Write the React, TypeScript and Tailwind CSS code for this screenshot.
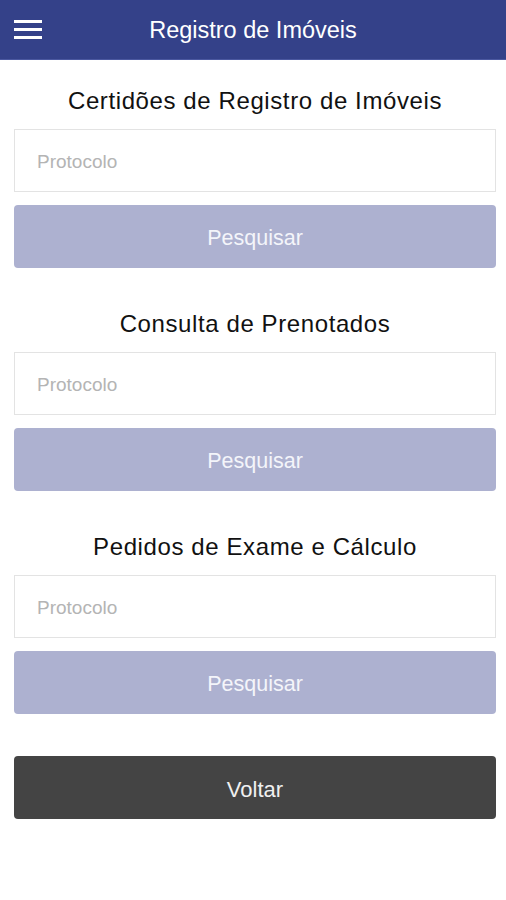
import React from "react";

function Section({ title }: { title: string }) {
  return (
    <div className="flex flex-col">
      <h2 className="text-center text-[24px] leading-[28px] tracking-[0.6px] text-[#111] mb-[14px]">{title}</h2>
      <input
        placeholder="Protocolo"
        className="h-[63px] w-full border border-[#e3e3e3] bg-white px-[22px] pt-[3px] text-[19px] text-[#333] placeholder:text-[#b4b4b4] outline-none"
      />
      <button className="mt-[13px] h-[63px] w-full rounded-[4px] bg-[#adb1d0] pt-[4px] text-[21.5px] text-[#f4f5fa]">
        Pesquisar
      </button>
    </div>
  );
}

export default function App() {
  return (
    <div
      className="min-h-[900px] w-[506px] bg-white"
      style={{ fontFamily: '"Liberation Sans", Arial, sans-serif' }}
    >
      <header className="relative flex h-[60px] items-center justify-center bg-[#344189] border-b border-[#4b58a0]">
        <div className="absolute left-[14px] top-[20px] flex flex-col gap-[5px]">
          <span className="block h-[3px] w-[28px] bg-white" />
          <span className="block h-[3px] w-[28px] bg-white" />
          <span className="block h-[3px] w-[28px] bg-white" />
        </div>
        <h1 className="mt-[3px] text-[23.5px] text-white">Registro de Imóveis</h1>
      </header>
      <main className="flex flex-col gap-[42px] pl-[14px] pr-[10px] pt-[27px]">
        <Section title="Certidões de Registro de Imóveis" />
        <Section title="Consulta de Prenotados" />
        <Section title="Pedidos de Exame e Cálculo" />
        <button className="h-[63px] w-full rounded-[4px] bg-[#444444] pt-[4px] text-[22px] text-[#f0f0f0]">
          Voltar
        </button>
      </main>
    </div>
  );
}
